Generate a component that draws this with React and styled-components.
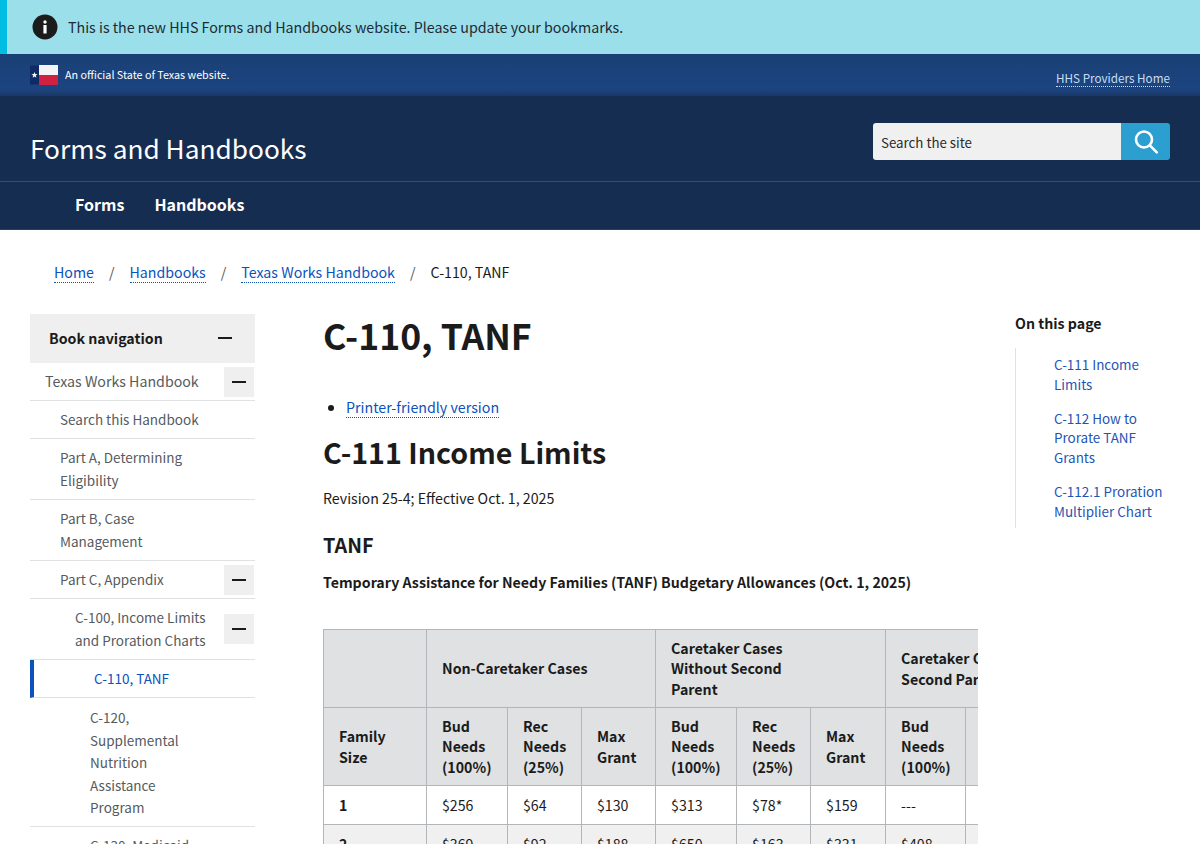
import { createGlobalStyle } from "styled-components";
import styled from "styled-components";

const GlobalStyle = createGlobalStyle`
  html, body {
    margin: 0;
    padding: 0;
    background: #fff;
  }

  body {
    font-family: "Noto Sans CJK SC", "Noto Sans", sans-serif;
    font-size: 14.2px;
    line-height: 22px;
    color: #1b1b1b;
  }

  a {
    text-decoration: none;
  }

  * {
    box-sizing: border-box;
  }
`;

const Alert = styled.div`
  height: 54px;
  display: flex;
  align-items: center;
  gap: 10px;
  padding-left: 32px;
  background: #9bdfeb;
  border-left: 7px solid #00bde3;
  font-size: 14.25px;
  color: #1b2b33;
`;

const AlertIcon = styled.svg`
  width: 26px;
  height: 26px;
  flex: none;
  margin-left: -7px;
`;

const TopBar = styled.div`
  height: 42px;
  display: flex;
  justify-content: space-between;
  padding: 0 30px;
  background: linear-gradient(#1a4075, #1c4480 85%, #1a3766);
`;

const Official = styled.div`
  display: flex;
  align-items: center;
  gap: 7px;
  height: 42px;
  font-size: 10.75px;
  color: #fff;
`;

const ProvidersLink = styled.a`
  align-self: flex-start;
  margin-top: 15px;
  font-size: 11.7px;
  line-height: 17px;
  color: #c5def5;
  border-bottom: 1px dotted #c5def5;
`;

const Masthead = styled.div`
  height: 86px;
  display: flex;
  align-items: center;
  justify-content: space-between;
  padding: 0 30px;
  background: #162d52;
  border-bottom: 1px solid #1d5590;
`;

const SiteTitle = styled.a`
  font-size: 26.25px;
  line-height: 40px;
  color: #fff;
  margin-top: 19px;
`;

const SearchBox = styled.form`
  width: 297px;
  height: 37px;
  margin-top: 6px;
  display: flex;
  border-radius: 3px;
  overflow: hidden;
`;

const SearchInput = styled.div`
  flex: 1;
  display: flex;
  align-items: center;
  padding: 2px 0 0 8px;
  background: #f0f0f0;
  color: #2a2a2a;
  font-size: 13.3px;
`;

const SearchButton = styled.button`
  width: 49px;
  border: 0;
  padding: 0;
  display: flex;
  align-items: center;
  justify-content: center;
  background: #2a9fd0;
`;

const MainNav = styled.nav`
  height: 48px;
  display: flex;
  align-items: center;
  gap: 30px;
  padding: 0 0 4px 75px;
  background: #162d52;
  border-bottom: 1px solid #2b4060;
`;

const NavLink = styled.a`
  font-size: 16px;
  font-weight: 700;
  color: #fff;
`;

const Breadcrumbs = styled.div`
  display: flex;
  align-items: center;
  height: 22px;
  margin: 31px 0 0 54px;
  font-size: 14.2px;
`;

const TextLink = styled.a`
  color: #0b52bd;
  border-bottom: 1px dotted #0b52bd;
  line-height: 20px;
`;

const Slash = styled.span`
  margin: 0 15px;
  color: #555;
`;

const Columns = styled.div`
  display: flex;
  align-items: flex-start;
  margin-top: 31px;
  padding-left: 30px;
`;

const Sidebar = styled.aside`
  width: 225px;
  flex: none;
  margin-right: 68px;
  color: #555b60;
`;

const SideHead = styled.div`
  height: 49px;
  display: flex;
  align-items: center;
  justify-content: space-between;
  padding: 0 23px 2px 19px;
  background: #efefef;
  font-size: 14.2px;
  font-weight: 700;
  color: #1b1b1b;
`;

const Minus = styled.span`
  display: block;
  width: 14px;
  height: 2px;
  background: #1b1b1b;
`;

const SideRow = styled.div`
  display: flex;
  align-items: center;
  justify-content: space-between;
  min-height: ${(p) => p.$height}px;
  padding-left: ${(p) => p.$indent}px;
  padding-right: ${(p) => p.$right || 0}px;
  padding-top: ${(p) => p.$top || 0}px;
  border-bottom: 1px solid #dfe1e2;
  font-size: ${(p) => p.$size || 13.5}px;
  line-height: 22.6px;
  color: ${(p) => (p.$active ? "#0b52bd" : "inherit")};

  ${(p) => p.$active && "border-left: 4px solid #0b52bd;"}
`;

const SideLabel = styled.span`
  width: 140px;
`;

const SideToggle = styled.span`
  flex: none;
  width: 30px;
  height: 30px;
  margin-left: auto;
  margin-right: 1px;
  display: flex;
  align-items: center;
  justify-content: center;
  background: #efefef;
`;

const Content = styled.main`
  width: 655px;
  flex: none;
`;

const PageTitle = styled.h1`
  margin: -1px 0 0;
  font-size: 35.6px;
  line-height: 44px;
  font-weight: 700;
  color: #1b1b1b;
`;

const PrintList = styled.ul`
  margin: 38px 0 0;
  padding-left: 23px;
  line-height: 24px;
  font-size: 14.25px;
`;

const SectionTitle = styled.h2`
  margin: 13px 0 0;
  font-size: 28.6px;
  line-height: 40px;
  font-weight: 700;
`;

const Revision = styled.p`
  margin: 14px 0 0;
  font-size: 14.2px;
  line-height: 24px;
`;

const SubTitle = styled.h3`
  margin: 22px 0 0;
  font-size: 19.8px;
  line-height: 26px;
  font-weight: 700;
`;

const TableCaption = styled.p`
  margin: 12px 0 0;
  font-size: 14.2px;
  line-height: 24px;
  font-weight: 700;
`;

const TableScroll = styled.div`
  margin-top: 35px;
  overflow: hidden;
`;

const Grid = styled.table`
  width: 802px;
  table-layout: fixed;
  border-collapse: collapse;
  font-size: 14.2px;
  line-height: 20.5px;

  th, td {
    border: 1px solid #b3b6b9;
    padding: 0 15px;
    text-align: left;
    vertical-align: middle;
  }

  th {
    background: #dfe1e2;
    font-weight: 700;
    color: #1b1b1b;
  }
`;

const HeadRow = styled.tr`
  height: 78px;
`;

const BodyRow = styled.tr`
  height: 39px;

  td {
    background: ${(p) => (p.$shaded ? "#f0f0f0" : "#fff")};
  }
`;

const PageNav = styled.aside`
  width: 165px;
  flex: none;
  margin-left: 37px;
`;

const PageNavTitle = styled.div`
  margin-top: -1px;
  font-size: 14.2px;
  font-weight: 700;
  line-height: 20px;
`;

const PageNavList = styled.div`
  margin-top: 15px;
  padding: 7px 0 7px 38px;
  border-left: 1px solid #dfe1e2;
  display: flex;
  flex-direction: column;
  gap: 14.5px;
`;

const PageNavLink = styled.a`
  font-size: 13.45px;
  line-height: 19.6px;
  color: #1f55b5;
`;

const sideItems = [
  { label: "Search this Handbook", indent: 30, height: 38 },
  { label: "Part A, Determining Eligibility", indent: 30, height: 61, right: 40 },
  { label: "Part B, Case Management", indent: 30, height: 61, right: 80 },
  { label: "Part C, Appendix", indent: 30, height: 38, toggle: true },
  { label: "C-100, Income Limits and Proration Charts", indent: 45, height: 61, toggle: true },
  { label: "C-110, TANF", indent: 60, height: 38, active: true },
  { label: "C-120, Supplemental Nutrition Assistance Program", indent: 60, height: 129, right: 70, top: 1 },
  { label: "C-130, Medicaid", indent: 60, height: 38 },
];

const heads = [
  "Bud Needs (100%)",
  "Rec Needs (25%)",
  "Max Grant",
  "Bud Needs (100%)",
  "Rec Needs (25%)",
  "Max Grant",
  "Bud Needs (100%)",
  "Rec Needs (25%)",
  "Max Grant",
];

const colWidths = [103, 81, 74, 74, 81, 74, 75, 80, 80, 80];

const rows = [
  ["1", "$256", "$64", "$130", "$313", "$78*", "$159", "---", "---", "---"],
  ["2", "$369", "$92", "$188", "$650", "$163", "$331", "$408", "$102", "$208"],
  ["3", "$408", "$102", "$208", "$751", "$188", "$382", "$650", "$163", "$331"],
];

const pageLinks = [
  "C-111 Income Limits",
  "C-112 How to Prorate TANF Grants",
  "C-112.1 Proration Multiplier Chart",
];

function TexasFlag() {
  return (
    <svg width="28" height="20" viewBox="0 0 28 20">
      <rect width="9" height="19" y="0.5" fill="#0f2a66" />
      <rect x="9" width="19" height="10" fill="#f4f4f6" />
      <rect x="9" y="10" width="19" height="10" fill="#cf2140" />
      <path d="M4.5 7l.8 2.1 2.3.1-1.8 1.4.6 2.2-1.9-1.2-1.9 1.2.6-2.2-1.8-1.4 2.3-.1z" fill="#f4f4f6" />
    </svg>
  );
}

export default function App() {
  return (
    <>
      <GlobalStyle />
      <Alert>
        <AlertIcon viewBox="0 0 26 26">
          <circle cx="13" cy="13" r="12.5" fill="#1b1b1b" />
          <circle cx="13" cy="8" r="1.7" fill="#fff" />
          <rect x="11.4" y="11" width="3.2" height="8.5" fill="#fff" />
        </AlertIcon>
        This is the new HHS Forms and Handbooks website. Please update your bookmarks.
      </Alert>
      <TopBar>
        <Official>
          <TexasFlag />
          An official State of Texas website.
        </Official>
        <ProvidersLink href="#">HHS Providers Home</ProvidersLink>
      </TopBar>
      <Masthead>
        <SiteTitle href="#">Forms and Handbooks</SiteTitle>
        <SearchBox>
          <SearchInput>Search the site</SearchInput>
          <SearchButton type="button" aria-label="Search">
            <svg width="26" height="26" viewBox="0 0 26 26" fill="none" stroke="#fff" strokeWidth="2.6">
              <circle cx="11" cy="10.5" r="8" />
              <path d="M16.8 16.3l7 7" strokeLinecap="round" />
            </svg>
          </SearchButton>
        </SearchBox>
      </Masthead>
      <MainNav>
        <NavLink href="#">Forms</NavLink>
        <NavLink href="#">Handbooks</NavLink>
      </MainNav>
      <Breadcrumbs>
        <TextLink href="#">Home</TextLink>
        <Slash>/</Slash>
        <TextLink href="#">Handbooks</TextLink>
        <Slash>/</Slash>
        <TextLink href="#">Texas Works Handbook</TextLink>
        <Slash>/</Slash>
        <span>C-110, TANF</span>
      </Breadcrumbs>
      <Columns>
        <Sidebar>
          <SideHead>
            Book navigation
            <Minus />
          </SideHead>
          <SideRow $indent={15} $height={38} $size={14.2}>
            Texas Works Handbook
            <SideToggle>
              <Minus />
            </SideToggle>
          </SideRow>
          {sideItems.map((item) => (
            <SideRow
              key={item.label}
              $indent={item.indent}
              $height={item.height}
              $right={item.right}
              $top={item.top}
              $active={item.active}
            >
              {item.toggle ? <SideLabel>{item.label}</SideLabel> : item.label}
              {item.toggle && (
                <SideToggle>
                  <Minus />
                </SideToggle>
              )}
            </SideRow>
          ))}
        </Sidebar>
        <Content>
          <PageTitle>C-110, TANF</PageTitle>
          <PrintList>
            <li>
              <TextLink href="#">Printer-friendly version</TextLink>
            </li>
          </PrintList>
          <SectionTitle>C-111 Income Limits</SectionTitle>
          <Revision>Revision 25-4; Effective Oct. 1, 2025</Revision>
          <SubTitle>TANF</SubTitle>
          <TableCaption>
            Temporary Assistance for Needy Families (TANF) Budgetary Allowances (Oct. 1, 2025)
          </TableCaption>
          <TableScroll>
            <Grid>
              <colgroup>
                {colWidths.map((w, i) => (
                  <col key={i} width={w} />
                ))}
              </colgroup>
              <thead>
                <HeadRow>
                  <th />
                  <th colSpan={3}>Non-Caretaker Cases</th>
                  <th colSpan={3}>
                    Caretaker Cases
                    <br />
                    Without Second
                    <br />
                    Parent
                  </th>
                  <th colSpan={3}>
                    Caretaker Cases With
                    <br />
                    Second Parent
                  </th>
                </HeadRow>
                <HeadRow>
                  <th>
                    Family
                    <br />
                    Size
                  </th>
                  {heads.map((h, i) => (
                    <th key={i}>{h}</th>
                  ))}
                </HeadRow>
              </thead>
              <tbody>
                {rows.map((r, i) => (
                  <BodyRow key={r[0]} $shaded={i % 2 === 1}>
                    <td>
                      <strong>{r[0]}</strong>
                    </td>
                    {r.slice(1).map((v, j) => (
                      <td key={j}>{v}</td>
                    ))}
                  </BodyRow>
                ))}
              </tbody>
            </Grid>
          </TableScroll>
        </Content>
        <PageNav>
          <PageNavTitle>On this page</PageNavTitle>
          <PageNavList>
            {pageLinks.map((l) => (
              <PageNavLink key={l} href="#">
                {l}
              </PageNavLink>
            ))}
          </PageNavList>
        </PageNav>
      </Columns>
    </>
  );
}
